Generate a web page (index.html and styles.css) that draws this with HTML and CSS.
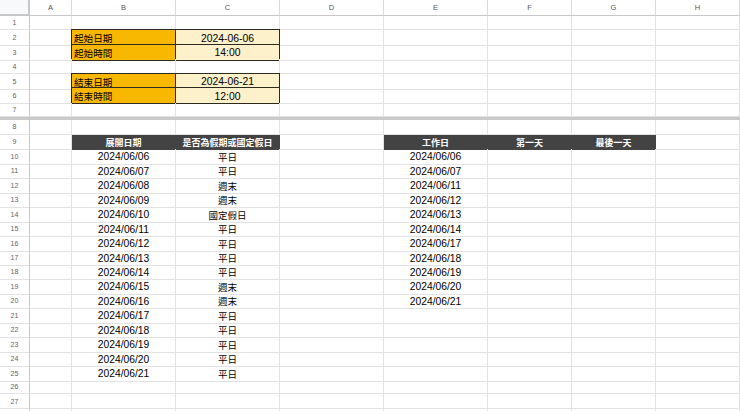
FILE: index.html
```html
<!DOCTYPE html>
<html lang="zh-Hant">
<head>
<meta charset="utf-8">
<title>Sheet</title>
<link rel="stylesheet" href="styles.css">
</head>
<body>
<div class="sheet">
  <div class="r hdr"><div class="corner"></div><div class="ch">A</div><div class="ch">B</div><div class="ch">C</div><div class="ch">D</div><div class="ch">E</div><div class="ch">F</div><div class="ch">G</div><div class="ch">H</div></div>
  <div class="r"><div class="n">1</div><div class="c"></div><div class="c"></div><div class="c"></div><div class="c"></div><div class="c"></div><div class="c"></div><div class="c"></div><div class="c"></div></div>
  <div class="r"><div class="n">2</div><div class="c"></div><div class="c box lab">起始日期</div><div class="c box val">2024-06-06</div><div class="c"></div><div class="c"></div><div class="c"></div><div class="c"></div><div class="c"></div></div>
  <div class="r"><div class="n">3</div><div class="c"></div><div class="c box lab">起始時間</div><div class="c box val">14:00</div><div class="c"></div><div class="c"></div><div class="c"></div><div class="c"></div><div class="c"></div></div>
  <div class="r"><div class="n">4</div><div class="c"></div><div class="c"></div><div class="c"></div><div class="c"></div><div class="c"></div><div class="c"></div><div class="c"></div><div class="c"></div></div>
  <div class="r"><div class="n">5</div><div class="c"></div><div class="c box lab">結束日期</div><div class="c box val">2024-06-21</div><div class="c"></div><div class="c"></div><div class="c"></div><div class="c"></div><div class="c"></div></div>
  <div class="r"><div class="n">6</div><div class="c"></div><div class="c box lab">結束時間</div><div class="c box val">12:00</div><div class="c"></div><div class="c"></div><div class="c"></div><div class="c"></div><div class="c"></div></div>
  <div class="r"><div class="n">7</div><div class="c"></div><div class="c"></div><div class="c"></div><div class="c"></div><div class="c"></div><div class="c"></div><div class="c"></div><div class="c"></div></div>
  <div class="freeze"></div>
  <div class="r"><div class="n">8</div><div class="c"></div><div class="c"></div><div class="c"></div><div class="c"></div><div class="c"></div><div class="c"></div><div class="c"></div><div class="c"></div></div>
  <div class="r"><div class="n">9</div><div class="c"></div><div class="c th">展開日期</div><div class="c th">是否為假期或國定假日</div><div class="c"></div><div class="c th">工作日</div><div class="c th">第一天</div><div class="c th">最後一天</div><div class="c"></div></div>
  <div class="r"><div class="n">10</div><div class="c"></div><div class="c d">2024/06/06</div><div class="c k">平日</div><div class="c"></div><div class="c d">2024/06/06</div><div class="c"></div><div class="c"></div><div class="c"></div></div>
  <div class="r"><div class="n">11</div><div class="c"></div><div class="c d">2024/06/07</div><div class="c k">平日</div><div class="c"></div><div class="c d">2024/06/07</div><div class="c"></div><div class="c"></div><div class="c"></div></div>
  <div class="r"><div class="n">12</div><div class="c"></div><div class="c d">2024/06/08</div><div class="c k">週末</div><div class="c"></div><div class="c d">2024/06/11</div><div class="c"></div><div class="c"></div><div class="c"></div></div>
  <div class="r"><div class="n">13</div><div class="c"></div><div class="c d">2024/06/09</div><div class="c k">週末</div><div class="c"></div><div class="c d">2024/06/12</div><div class="c"></div><div class="c"></div><div class="c"></div></div>
  <div class="r"><div class="n">14</div><div class="c"></div><div class="c d">2024/06/10</div><div class="c k">國定假日</div><div class="c"></div><div class="c d">2024/06/13</div><div class="c"></div><div class="c"></div><div class="c"></div></div>
  <div class="r"><div class="n">15</div><div class="c"></div><div class="c d">2024/06/11</div><div class="c k">平日</div><div class="c"></div><div class="c d">2024/06/14</div><div class="c"></div><div class="c"></div><div class="c"></div></div>
  <div class="r"><div class="n">16</div><div class="c"></div><div class="c d">2024/06/12</div><div class="c k">平日</div><div class="c"></div><div class="c d">2024/06/17</div><div class="c"></div><div class="c"></div><div class="c"></div></div>
  <div class="r"><div class="n">17</div><div class="c"></div><div class="c d">2024/06/13</div><div class="c k">平日</div><div class="c"></div><div class="c d">2024/06/18</div><div class="c"></div><div class="c"></div><div class="c"></div></div>
  <div class="r"><div class="n">18</div><div class="c"></div><div class="c d">2024/06/14</div><div class="c k">平日</div><div class="c"></div><div class="c d">2024/06/19</div><div class="c"></div><div class="c"></div><div class="c"></div></div>
  <div class="r"><div class="n">19</div><div class="c"></div><div class="c d">2024/06/15</div><div class="c k">週末</div><div class="c"></div><div class="c d">2024/06/20</div><div class="c"></div><div class="c"></div><div class="c"></div></div>
  <div class="r"><div class="n">20</div><div class="c"></div><div class="c d">2024/06/16</div><div class="c k">週末</div><div class="c"></div><div class="c d">2024/06/21</div><div class="c"></div><div class="c"></div><div class="c"></div></div>
  <div class="r"><div class="n">21</div><div class="c"></div><div class="c d">2024/06/17</div><div class="c k">平日</div><div class="c"></div><div class="c"></div><div class="c"></div><div class="c"></div><div class="c"></div></div>
  <div class="r"><div class="n">22</div><div class="c"></div><div class="c d">2024/06/18</div><div class="c k">平日</div><div class="c"></div><div class="c"></div><div class="c"></div><div class="c"></div><div class="c"></div></div>
  <div class="r"><div class="n">23</div><div class="c"></div><div class="c d">2024/06/19</div><div class="c k">平日</div><div class="c"></div><div class="c"></div><div class="c"></div><div class="c"></div><div class="c"></div></div>
  <div class="r"><div class="n">24</div><div class="c"></div><div class="c d">2024/06/20</div><div class="c k">平日</div><div class="c"></div><div class="c"></div><div class="c"></div><div class="c"></div><div class="c"></div></div>
  <div class="r"><div class="n">25</div><div class="c"></div><div class="c d">2024/06/21</div><div class="c k">平日</div><div class="c"></div><div class="c"></div><div class="c"></div><div class="c"></div><div class="c"></div></div>
  <div class="r"><div class="n">26</div><div class="c"></div><div class="c"></div><div class="c"></div><div class="c"></div><div class="c"></div><div class="c"></div><div class="c"></div><div class="c"></div></div>
  <div class="r"><div class="n">27</div><div class="c"></div><div class="c"></div><div class="c"></div><div class="c"></div><div class="c"></div><div class="c"></div><div class="c"></div><div class="c"></div></div>
  <div class="r last"><div class="n"></div><div class="c"></div><div class="c"></div><div class="c"></div><div class="c"></div><div class="c"></div><div class="c"></div><div class="c"></div><div class="c"></div></div>
</div>
</body>
</html>
```

FILE: styles.css
```css
* { box-sizing: border-box; }
html, body { margin: 0; padding: 0; background: #fff; }
body { width: 740px; height: 411px; overflow: hidden; }

.sheet {
  --rh: 14.45px;
  display: flex;
  flex-direction: column;
  font-family: "Liberation Sans", Arial, "Noto Sans CJK TC", sans-serif;
  color: #000;
}

.r {
  display: grid;
  grid-template-columns: 30px 42px 104px 104px 104px 104px 84px 84px 84px;
  height: var(--rh);
  flex: none;
}

.hdr { height: 16px; }

.corner {
  background: #f8f9fa;
  border-right: 2px solid #c7c7c7;
  border-bottom: 2px solid #c7c7c7;
}

.ch {
  display: flex;
  align-items: center;
  justify-content: center;
  font-size: 7.5px;
  color: #555;
  background: #fff;
  border-right: 1px solid #dadada;
  border-bottom: 1px solid #c7c7c7;
}

.n {
  display: flex;
  align-items: center;
  justify-content: center;
  font-size: 7px;
  color: #5f5f5f;
  border-right: 1px solid #c7c7c7;
  border-bottom: 1px solid #e2e2e2;
}

.c {
  display: flex;
  align-items: center;
  justify-content: center;
  border-right: 1px solid #e2e2e2;
  border-bottom: 1px solid #e2e2e2;
  white-space: nowrap;
  overflow: visible;
  padding-top: 1px;
}

.freeze {
  height: 3px;
  flex: none;
  background: #c9c9c9;
}

.box {
  border-right-color: #2e2a20;
  border-bottom-color: #2e2a20;
  box-shadow: -1px 0 0 #2e2a20, 0 -1px 0 #2e2a20, -1px -1px 0 #2e2a20;
}

.lab {
  justify-content: flex-start;
  padding-left: 2px;
  background: #f8b700;
  font-family: "Noto Sans CJK TC", sans-serif;
  font-size: 9.6px;
}

.val {
  background: #fdf1cc;
  font-size: 10.4px;
}

.th {
  background: #434343;
  border-right-color: #434343;
  border-bottom-color: #434343;
  color: #fff;
  font-family: "Noto Sans CJK TC", sans-serif;
  font-weight: 700;
  font-size: 9px;
}

.d { font-size: 10.3px; }

.k {
  font-family: "Noto Sans CJK TC", sans-serif;
  font-size: 9.5px;
}
```
